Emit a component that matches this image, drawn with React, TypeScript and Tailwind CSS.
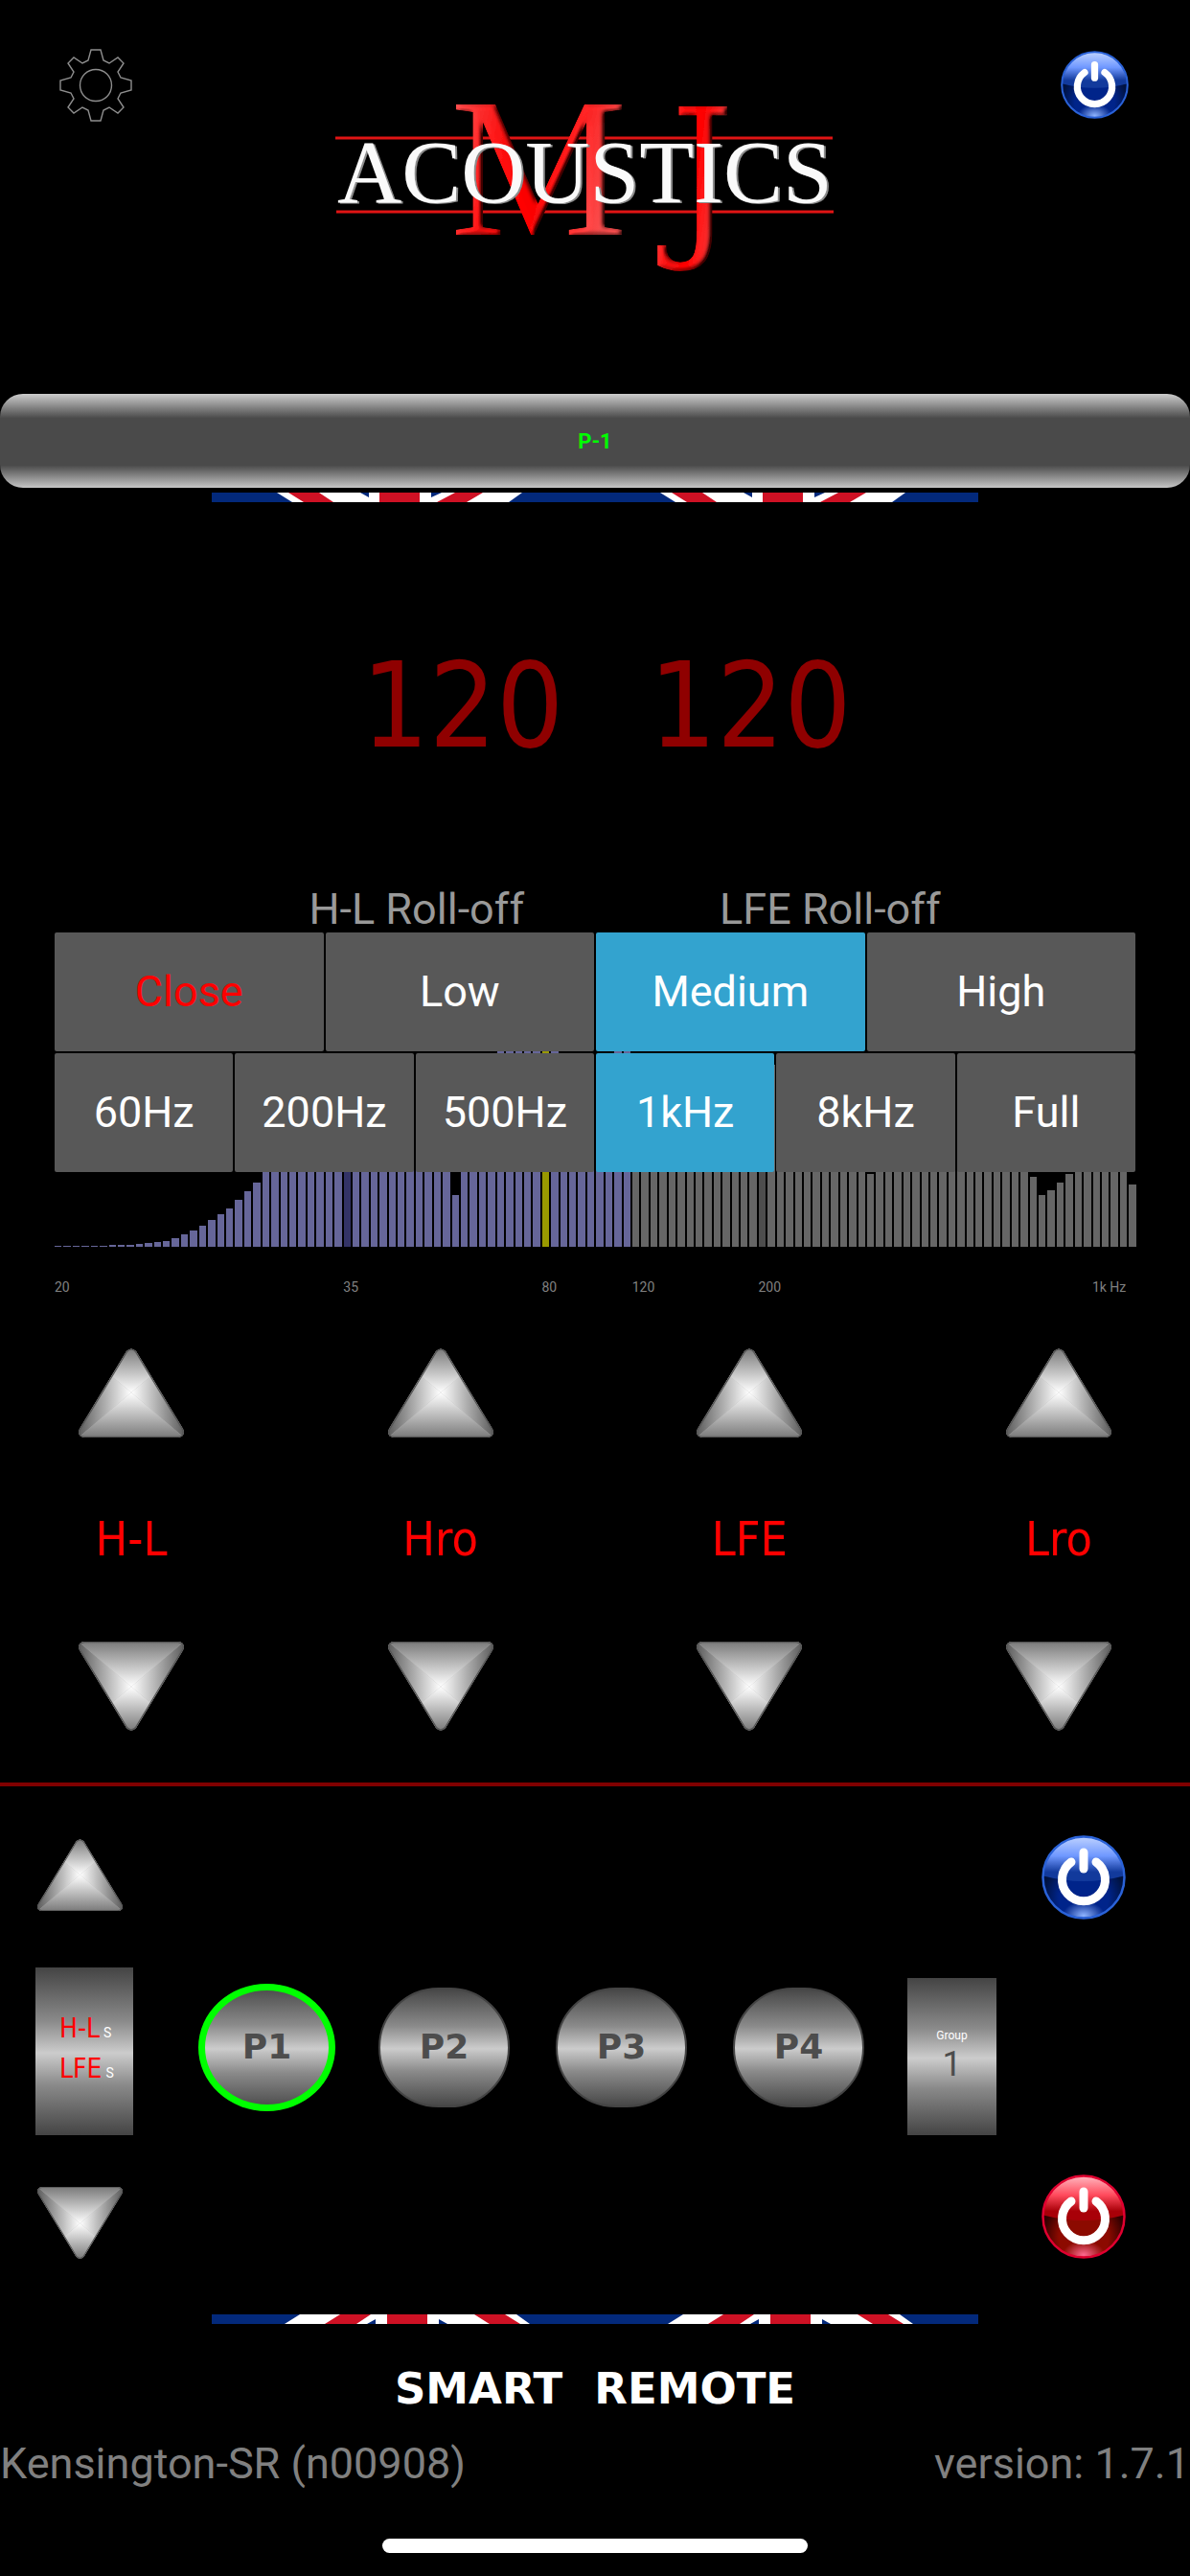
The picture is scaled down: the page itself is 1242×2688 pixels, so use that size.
import { useId, useState } from "react";

const BANDS = ["60Hz", "200Hz", "500Hz", "1kHz", "8kHz", "Full"];
const LEVELS = ["Low", "Medium", "High"];
const PRESETS = ["P1", "P2", "P3", "P4"];
const CHANNELS = ["H-L", "Hro", "LFE", "Lro"];

const TICKS = [
  { col: 1, label: "20" },
  { col: 33, label: "35" },
  { col: 55, label: "80" },
  { col: 65, label: "120" },
  { col: 79, label: "200" },
  { col: 116, label: "1k Hz" },
];

const BAR_COUNT = 120;
const SLOPE = [1, 1, 1, 1, 1, 1, 2, 2, 2, 3, 4, 5, 6, 9, 13, 17, 22, 28, 34, 40, 49, 58, 67];
const DIPS: Record<number, number> = { 44: 54, 90: 76, 108: 73, 109: 54, 110: 59, 111: 67, 112: 76, 119: 65 };
const PEAKS = [49, 50, 51, 52, 53, 54, 55, 62, 63];

function barHeight(i: number) {
  if (i < SLOPE.length) return SLOPE[i];
  if (DIPS[i]) return DIPS[i];
  return PEAKS.includes(i) ? 204 : 190;
}

function barColor(i: number) {
  if (i === 32) return "bg-[#333366]";
  if (i === 54) return "bg-[#999900]";
  if (i === 78) return "bg-[#4d4d4d]";
  return i < 64 ? "bg-[#666699]" : "bg-[#666666]";
}

const LED = "font-['DejaVu_Sans_Condensed','DejaVu_Sans',sans-serif]";
const METAL = "bg-[linear-gradient(to_bottom,#444_0%,#8a8a8a_32%,#ccc_51%,#8a8a8a_70%,#444_100%)]";

function Gear() {
  return (
    <svg viewBox="-38 -38 76 76" className="size-[76px]" fill="none" stroke="#8e8e8e" strokeWidth="1.4">
      <path d="M-5-37H5L8-26 14-23 23-29 29-23 23-14 26-8 37-5V5L26 8 23 14 29 23 23 29 14 23 8 26 5 37H-5L-8 26-14 23-23 29-29 23-23 14-26 8-37 5V-5L-26-8-23-14-29-23-23-29-14-23-8-26Z" />
      <circle r="16.5" />
    </svg>
  );
}

function Logo() {
  return (
    <svg viewBox="0 0 546 184" className="mt-[57px] w-[546px] overflow-visible" role="img" aria-label="MJ Acoustics">
      <defs>
        <linearGradient id="red" x1="0" x2="1" y1="0" y2="0.3">
          <stop offset="0" stopColor="#ff5a5a" />
          <stop offset="0.35" stopColor="#ff1414" />
          <stop offset="0.6" stopColor="#f00" />
          <stop offset="1" stopColor="#ff5050" />
        </linearGradient>
        <filter id="bevelRed" x="-10%" y="-10%" width="120%" height="130%">
          <feGaussianBlur in="SourceAlpha" stdDeviation="2.5" result="b" />
          <feDiffuseLighting in="b" surfaceScale="5" lightingColor="#fff" result="l">
            <feDistantLight azimuth="200" elevation="50" />
          </feDiffuseLighting>
          <feComposite in="SourceGraphic" in2="l" operator="arithmetic" k1="1.2" k2="0.05" result="c" />
          <feComposite in="c" in2="SourceAlpha" operator="in" />
        </filter>
        <filter id="bevelWhite" x="-5%" y="-10%" width="110%" height="130%">
          <feOffset in="SourceAlpha" dx="2" dy="1" result="o" />
          <feFlood floodColor="#8c8c8c" />
          <feComposite in2="o" operator="in" result="s" />
          <feMerge>
            <feMergeNode in="s" />
            <feMergeNode in="SourceGraphic" />
          </feMerge>
        </filter>
      </defs>
      <path d="M0 36H519M1 113H520" stroke="#e01414" strokeWidth="3" />
      <g fill="url(#red)" filter="url(#bevelRed)">
        <text x="120" y="137" fontSize="208" className="font-['Liberation_Serif',serif]">M</text>
        <text x="350" y="137" fontSize="184" className="font-['DejaVu_Serif_Condensed','DejaVu_Serif',serif]">J</text>
      </g>
      <text x="2" y="103" fontSize="93" fill="#fafafa" filter="url(#bevelWhite)" className="font-['Liberation_Serif',serif]">
        ACOUSTICS
      </text>
    </svg>
  );
}

function PowerIcon({ tone }: { tone: "blue" | "red" }) {
  const id = useId();
  const c =
    tone === "blue"
      ? { rim: "#2a62d8", hi: "#c4d6ff", mid: "#6f98ff", low: "#123a9c", dark: "#00123f", deep: "#00248a", glow: "#8fb4ff" }
      : { rim: "#e00030", hi: "#ffc0c8", mid: "#ff4a5c", low: "#a80008", dark: "#300000", deep: "#8c0a00", glow: "#ff6a90" };
  return (
    <svg viewBox="0 0 88 88" className="size-full">
      <defs>
        <linearGradient id={id + "t"} x1="0" x2="0" y1="0" y2="1">
          <stop offset="0" stopColor={c.hi} />
          <stop offset="0.45" stopColor={c.mid} />
          <stop offset="0.8" stopColor={c.low} />
          <stop offset="1" stopColor={c.low} />
        </linearGradient>
        <radialGradient id={id + "b"} cx="0.5" cy="0.75" r="0.5">
          <stop offset="0" stopColor={c.deep} />
          <stop offset="0.6" stopColor={c.deep} />
          <stop offset="1" stopColor={c.dark} />
        </radialGradient>
        <radialGradient id={id + "g"}>
          <stop offset="0" stopColor={c.glow} />
          <stop offset="1" stopColor={c.glow} stopOpacity="0" />
        </radialGradient>
        <clipPath id={id + "c"}>
          <circle cx="44" cy="44" r="42" />
        </clipPath>
      </defs>
      <circle cx="44" cy="44" r="43" fill={`url(#${id}b)`} />
      <g clipPath={`url(#${id}c)`}>
        <ellipse cx="44" cy="84" rx="22" ry="15" fill={`url(#${id}g)`} />
        <path d="M0 42Q44 54 88 42V0H0Z" fill={`url(#${id}t)`} />
      </g>
      <circle cx="44" cy="44" r="42.5" fill="none" stroke={c.rim} strokeWidth="2.5" />
      <g fill="none" stroke="#fff" strokeWidth="9" strokeLinecap="round">
        <path d="M31 28A22.5 22.5 0 1 0 57 28" />
        <path d="M44 18V35" />
      </g>
    </svg>
  );
}

function Arrow({ down = false }: { down?: boolean }) {
  const id = useId();
  return (
    <svg viewBox="0 0 110 93" className={down ? "w-full rotate-180" : "w-full"}>
      <defs>
        <linearGradient id={id + "u"} x1="0" x2="0" y1="1" y2="0">
          <stop offset="0" stopColor="#fff" />
          <stop offset="1" stopColor="#7a7a7a" />
        </linearGradient>
        <linearGradient id={id + "d"} x1="0" x2="0" y1="0" y2="1">
          <stop offset="0" stopColor="#fff" />
          <stop offset="1" stopColor="#7a7a7a" />
        </linearGradient>
        <linearGradient id={id + "l"} x1="1" x2="0" y1="0" y2="0">
          <stop offset="0" stopColor="#fff" />
          <stop offset="1" stopColor="#5c5c5c" />
        </linearGradient>
        <linearGradient id={id + "r"} x1="0" x2="1" y1="0" y2="0">
          <stop offset="0" stopColor="#fff" />
          <stop offset="1" stopColor="#5c5c5c" />
        </linearGradient>
        <clipPath id={id + "c"}>
          <path d="M50 3Q55-2 60 3L109 84Q112 92 104 93H6Q-2 92 1 84Z" />
        </clipPath>
      </defs>
      <g clipPath={`url(#${id}c)`}>
        <rect width="110" height="93" fill="#bbb" />
        <path d="M55 46L0 0H110Z" fill={`url(#${id}u)`} />
        <path d="M55 46L0 93H110Z" fill={`url(#${id}d)`} />
        <path d="M55 46L0 0V93Z" fill={`url(#${id}l)`} />
        <path d="M55 46L110 0V93Z" fill={`url(#${id}r)`} />
        <path d="M50 3Q55-2 60 3L109 84Q112 92 104 93H6Q-2 92 1 84Z" fill="none" stroke="#555" strokeWidth="2.5" />
      </g>
    </svg>
  );
}

function FlagTop() {
  return (
    <svg viewBox="0 0 400 10" className="w-1/2" preserveAspectRatio="none">
      <rect width="400" height="10" fill="#03297b" />
      <path d="M68 0H324L310 10H84Z" fill="#fff" />
      <path d="M80 0H112L127 10H96ZM175 0H217V10H175ZM254 0H283L266 10H235Z" fill="#ce1124" />
      <path d="M155 0H164V5ZM229 0H240L229 5Z" fill="#03297b" />
    </svg>
  );
}

function FlagBottom() {
  return (
    <svg viewBox="0 0 400 10" className="w-1/2" preserveAspectRatio="none">
      <rect width="400" height="10" fill="#03297b" />
      <path d="M92 0H318L332 10H76Z" fill="#fff" />
      <path d="M134 0H166L151 10H118ZM183 0H225V10H183ZM274 0H306L322 10H290Z" fill="#ce1124" />
      <path d="M162 10H171V5ZM237 10V5L246 10Z" fill="#03297b" />
    </svg>
  );
}

function Cell({ label, on, onClick, danger }: { label: string; on?: boolean; danger?: boolean; onClick?: () => void }) {
  return (
    <button
      onClick={onClick}
      className={`h-[124px] flex-1 rounded-xs text-[45px] ${on ? "bg-[#33a3cf]" : "bg-[#585858]"} ${danger ? "text-[#f00]" : "text-white"}`}
    >
      {label}
    </button>
  );
}

export default function App() {
  const [level, setLevel] = useState("Medium");
  const [band, setBand] = useState("1kHz");
  const [preset, setPreset] = useState("P1");

  return (
    <div className="flex min-h-screen w-full flex-col bg-black font-[Roboto,sans-serif]">
      <header className="flex h-[411px] items-start justify-between pt-[51px] pr-[64px] pl-[62px]">
        <button aria-label="Settings">
          <Gear />
        </button>
        <Logo />
        <button aria-label="Power" className="mt-[2px] size-[71px]">
          <PowerIcon tone="blue" />
        </button>
      </header>

      <button className="h-[98px] w-full rounded-3xl bg-[linear-gradient(to_bottom,#ccc_0%,#4a4a4a_26%,#4a4a4a_76%,#c6c6c6_100%)] text-[22px] font-bold text-[#0f0]">
        P-1
      </button>
      <div className="mx-auto mt-[5px] flex h-[10px] w-[800px]">
        <FlagTop />
        <FlagTop />
      </div>

      <div className={`mt-[120px] flex justify-center gap-[89px] pl-[24px] text-[123px] leading-[186px] text-[#8f0000] ${LED}`}>
        <output>120</output>
        <output>120</output>
      </div>

      <div className="mt-[95px] flex justify-center gap-[204px] pl-[62px] text-[45px] leading-[48px] text-[#999]">
        <span>H-L Roll-off</span>
        <span>LFE Roll-off</span>
      </div>

      <section className="relative mx-[57px]">
        <div className="flex h-[328px] items-end gap-[2px]">
          {Array.from({ length: BAR_COUNT }, (_, i) => (
            <div key={i} className={`flex-1 ${barColor(i)}`} style={{ height: barHeight(i) }} />
          ))}
        </div>
        <div className="mt-[34px] grid h-4 grid-cols-[repeat(120,minmax(0,1fr))] gap-x-[2px] text-[14px] leading-4 whitespace-nowrap text-[#808080]">
          {TICKS.map((t) => (
            <span key={t.label} style={{ gridColumnStart: t.col }}>
              {t.label}
            </span>
          ))}
        </div>
        {/* filter picker, opens over the response graph */}
        <div className="absolute inset-x-0 top-0 flex flex-col gap-[2px]">
          <div className="flex gap-[2px]">
            <Cell label="Close" danger />
            {LEVELS.map((l) => (
              <Cell key={l} label={l} on={l === level} onClick={() => setLevel(l)} />
            ))}
          </div>
          <div className="flex gap-[2px]">
            {BANDS.map((b) => (
              <Cell key={b} label={b} on={b === band} onClick={() => setBand(b)} />
            ))}
          </div>
        </div>
      </section>

      <section className="mt-[56px] flex justify-between px-[82px]">
        {CHANNELS.map((c) => (
          <div key={c} className="flex w-[110px] flex-col items-center">
            <button aria-label={`${c} up`} className="w-full">
              <Arrow />
            </button>
            <span className={`my-[72px] h-[69px] text-[50px] leading-[69px] whitespace-nowrap text-[#f00] ${LED}`}>{c}</span>
            <button aria-label={`${c} down`} className="w-full">
              <Arrow down />
            </button>
          </div>
        ))}
      </section>

      <hr className="mt-[54px] border-t-4 border-[#800000]" />

      <section className="mt-[51px] flex h-[442px] items-center pr-[67px] pl-[37px]">
        <div className="flex flex-col items-start self-end">
          <button aria-label="Volume up" className="ml-[2px] w-[89px]">
            <Arrow />
          </button>
          <button className={`mt-[59px] mb-[54px] flex h-[175px] w-[102px] flex-col items-start justify-center pl-[25px] text-[28px] leading-[37px] text-[#f00] ${METAL}`}>
            <span className={LED}>
              H-L<small className="ml-1 font-[Roboto,sans-serif] text-[14px] text-white">S</small>
            </span>
            <span className={LED}>
              LFE<small className="ml-1 font-[Roboto,sans-serif] text-[14px] text-white">S</small>
            </span>
          </button>
          <button aria-label="Volume down" className="ml-[2px] w-[89px]">
            <Arrow down />
          </button>
        </div>

        <div className="ml-[68px] flex items-center gap-[42px]">
          {PRESETS.map((p) => (
            <div key={p} className="flex w-[143px] justify-center">
              <button
                onClick={() => setPreset(p)}
                className={`bg-origin-border font-['DejaVu_Sans',sans-serif] text-[36px] font-bold text-[#4d4d4d] ${METAL} ${
                  p === preset
                    ? "h-[133px] w-[143px] rounded-[50%] border-[7px] border-[#0f0]"
                    : "h-[125px] w-[137px] rounded-full border-2 border-[#444]"
                }`}
              >
                {p}
              </button>
            </div>
          ))}
          <button className={`mt-[20px] flex h-[164px] w-[93px] flex-col items-center justify-center ${METAL}`}>
            <span className="text-[12px] leading-4 text-white">Group</span>
            <span className="text-[36px] leading-[44px] text-[#4d4d4d]">1</span>
          </button>
        </div>

        <div className="ml-auto flex h-full flex-col justify-between">
          <button aria-label="All on" className="size-[88px]">
            <PowerIcon tone="blue" />
          </button>
          <button aria-label="All off" className="size-[88px]">
            <PowerIcon tone="red" />
          </button>
        </div>
      </section>

      <footer>
        <div className="mx-auto mt-[58px] flex h-[10px] w-[800px]">
          <FlagBottom />
          <FlagBottom />
        </div>
        <h1 className="mt-[42px] flex justify-center gap-[33px] font-['DejaVu_Sans',sans-serif] text-[45px] leading-[52px] font-bold text-white">
          <span>SMART</span>
          <span>REMOTE</span>
        </h1>
        <div className="mt-[26px] flex justify-between text-[45px] leading-[52px] text-[#808080]">
          <span>Kensington-SR (n00908)</span>
          <span>version: 1.7.1</span>
        </div>
        <div className="mx-auto mt-[52px] mb-[24px] h-[15px] w-[444px] rounded-full bg-white" />
      </footer>
    </div>
  );
}
